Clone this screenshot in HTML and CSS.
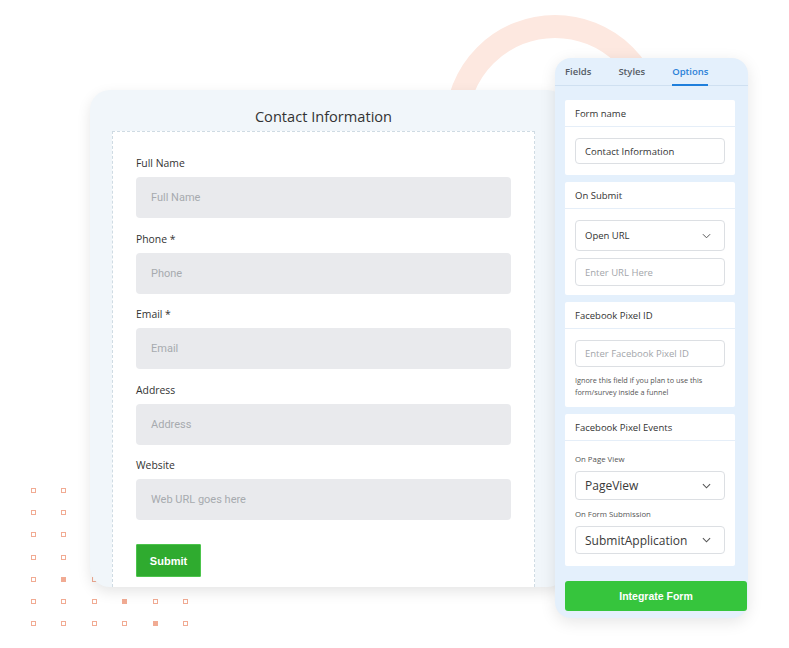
FILE: index.html
```html
<!DOCTYPE html>
<html lang="en">
<head>
<meta charset="utf-8">
<title>Contact Information form builder</title>
<link rel="stylesheet" href="styles.css">
</head>
<body>
<div class="stage">
  <div class="arc"></div>
  <div class="dots">
    <span></span><span></span><span></span><span></span><span></span><span></span>
    <span></span><span></span><span></span><span></span><span></span><span></span>
    <span></span><span></span><span></span><span></span><span></span><span></span>
    <span></span><span></span><span></span><span></span><span></span><span></span>
    <span></span><span class="fill"></span><span></span><span></span><span></span><span></span>
    <span></span><span></span><span></span><span class="fill"></span><span></span><span></span>
    <span></span><span></span><span></span><span></span><span class="fill"></span><span></span>
  </div>

  <div class="windows">
    <section class="form-card">
      <h1 class="form-title">Contact Information</h1>
      <div class="form-body">
        <div class="field">
          <div class="label">Full Name</div>
          <div class="input">Full Name</div>
        </div>
        <div class="field">
          <div class="label">Phone *</div>
          <div class="input">Phone</div>
        </div>
        <div class="field">
          <div class="label">Email *</div>
          <div class="input">Email</div>
        </div>
        <div class="field">
          <div class="label">Address</div>
          <div class="input">Address</div>
        </div>
        <div class="field last">
          <div class="label">Website</div>
          <div class="input">Web URL goes here</div>
        </div>
        <button class="submit">Submit</button>
      </div>
    </section>

    <aside class="panel">
      <nav class="tabs">
        <span class="tab">Fields</span>
        <span class="tab">Styles</span>
        <span class="tab active">Options</span>
      </nav>

      <div class="section s-name">
        <div class="sec-head">Form name</div>
        <div class="sec-body">
          <div class="box box-name">Contact Information</div>
        </div>
      </div>

      <div class="section s-submit">
        <div class="sec-head">On Submit</div>
        <div class="sec-body">
          <div class="box select sel-url">Open URL
            <svg class="chev" viewBox="0 0 10 6" width="9" height="6"><path d="M1 1l4 4 4-4" fill="none" stroke="#555" stroke-width="1.1"/></svg>
          </div>
          <div class="box ph box-url">Enter URL Here</div>
        </div>
      </div>

      <div class="section s-pixel">
        <div class="sec-head">Facebook Pixel ID</div>
        <div class="sec-body">
          <div class="box ph box-pixel">Enter Facebook Pixel ID</div>
          <p class="help">Ignore this field if you plan to use this form/survey inside a funnel</p>
        </div>
      </div>

      <div class="section s-events">
        <div class="sec-head">Facebook Pixel Events</div>
        <div class="sec-body">
          <div class="small">On Page View</div>
          <div class="box select big sel-view">PageView
            <svg class="chev" viewBox="0 0 10 6" width="9" height="6"><path d="M1 1l4 4 4-4" fill="none" stroke="#555" stroke-width="1.2"/></svg>
          </div>
          <div class="small second">On Form Submission</div>
          <div class="box select big sel-sub">SubmitApplication
            <svg class="chev" viewBox="0 0 10 6" width="9" height="6"><path d="M1 1l4 4 4-4" fill="none" stroke="#555" stroke-width="1.2"/></svg>
          </div>
        </div>
      </div>

      <button class="integrate">Integrate Form</button>
    </aside>
  </div>
</div>
</body>
</html>
```

FILE: styles.css
```css
* { box-sizing: border-box; }

html, body {
  margin: 0;
  padding: 0;
  background: #ffffff;
}

body {
  font-family: "Open Sans", "Noto Sans", sans-serif;
  color: #333;
}

.stage {
  position: relative;
  width: 789px;
  height: 648px;
  overflow: hidden;
}

/* decorative ring behind the windows */
.arc {
  position: absolute;
  left: 445px;
  top: 15px;
  width: 220px;
  height: 220px;
  border: 23px solid #fde8e0;
  border-radius: 50%;
  z-index: 0;
}

/* decorative dot grid */
.dots {
  position: absolute;
  left: 31px;
  top: 488px;
  display: grid;
  grid-template-columns: repeat(6, 5px);
  grid-auto-rows: 5px;
  column-gap: 25.4px;
  row-gap: 17.2px;
  z-index: 0;
}
.dots span {
  width: 5px;
  height: 5px;
  border: 1.4px solid #f1ab93;
}
.dots span.fill {
  background: #f1ab93;
}

.windows {
  position: relative;
  z-index: 1;
  display: flex;
  align-items: flex-start;
  padding: 58px 0 0 90px;
}

/* ---------- left form window ---------- */
.form-card {
  width: 477px;
  height: 497px;
  margin-top: 32px;
  background: #f1f6fa;
  border-radius: 20px;
  box-shadow: 0 5px 14px rgba(0, 0, 0, 0.1);
  padding: 0 32px 0 22px;
  display: flex;
  flex-direction: column;
  overflow: hidden;
}

.form-title {
  margin: 0;
  padding: 16px 0 5px;
  height: 41px;
  font-size: 14.6px;
  line-height: 20px;
  font-weight: 400;
  text-align: center;
  color: #333;
  width: 423px;
}

.form-body {
  width: 423px;
  flex: 1;
  background: #fff;
  border: 1px dashed #cfdbe3;
  border-bottom: none;
  padding: 24px 23px 0;
}

.field {
  margin-bottom: 13.5px;
}

.field.last {
  margin-bottom: 0;
}

.label {
  font-size: 10.4px;
  line-height: 14px;
  color: #333;
  margin-bottom: 7px;
}

.input {
  width: 375px;
  height: 41px;
  background: #e9eaed;
  border-radius: 4px;
  padding-left: 15px;
  display: flex;
  align-items: center;
  font-family: Roboto, "Open Sans", sans-serif;
  font-size: 11px;
  color: #a7aaaf;
}

.submit {
  display: block;
  margin-top: 24px;
  width: 65px;
  height: 33px;
  border: 1px solid #4cc44c;
  border-radius: 1px;
  background: #2fab2f;
  color: #fff;
  font-family: "Liberation Sans", Arial, sans-serif;
  font-weight: 700;
  font-size: 11px;
  padding: 0;
}

/* ---------- right options panel ---------- */
.panel {
  position: relative;
  z-index: 2;
  width: 193px;
  margin-left: -12px;
  background: #e4f0fc;
  border-radius: 16px;
  box-shadow: 0 4px 16px rgba(0, 0, 0, 0.1);
  padding: 0 13px 7px 10px;
}

.tabs {
  display: flex;
  gap: 27px;
  height: 28px;
  margin: 0 -13px 0 -10px;
  padding-left: 10px;
  border-bottom: 1px solid #cfe0f1;
}

.tab {
  display: flex;
  align-items: center;
  font-size: 9.5px;
  font-weight: 600;
  color: #555c66;
  border-bottom: 2px solid transparent;
  margin-bottom: -1px;
}

.tab.active {
  color: #2a81d8;
  border-bottom-color: #1f7fdc;
}

.section {
  background: #fff;
  border-radius: 2px;
  margin-top: 7px;
}

.s-name {
  margin-top: 14px;
}

.sec-head {
  height: 27px;
  padding-left: 10px;
  display: flex;
  align-items: center;
  font-size: 9.5px;
  color: #333;
  border-bottom: 1px solid #e5eef8;
}

.sec-body {
  padding: 11px 10px;
}

.box {
  width: 150px;
  border: 1px solid #dcdfe3;
  border-radius: 4px;
  background: #fff;
  padding-left: 9px;
  display: flex;
  align-items: center;
  font-size: 9.5px;
  color: #333;
}

.box.ph {
  color: #a3a6aa;
}

.box-name { height: 26px; }

.s-submit .sec-body { padding: 11px 10px 9px; }
.sel-url { height: 31px; }
.box-url { height: 28px; margin-top: 7px; }

.box-pixel { height: 27px; }

.select {
  justify-content: space-between;
  padding-right: 13px;
}

.select.big {
  font-size: 12px;
  color: #3a3a3a;
}

.chev { display: block; }

.help {
  margin: 7px 0 0;
  font-size: 7.3px;
  line-height: 12px;
  color: #555;
}

.s-pixel .sec-body { padding: 11px 10px 9px; }

.s-events .sec-body { padding: 12px 10px 12px; }

.small {
  font-size: 7.8px;
  line-height: 12px;
  color: #555;
}

.small.second { margin-top: 8px; }

.sel-view { height: 29px; margin-top: 6px; }
.sel-sub { height: 28px; margin-top: 6px; }

.integrate {
  display: block;
  margin-top: 15px;
  width: 182px;
  height: 30px;
  border: none;
  border-radius: 3px;
  background: #36c53d;
  color: #fff;
  font-family: "Liberation Sans", Arial, sans-serif;
  font-weight: 700;
  font-size: 10.5px;
  padding: 0;
}
```
